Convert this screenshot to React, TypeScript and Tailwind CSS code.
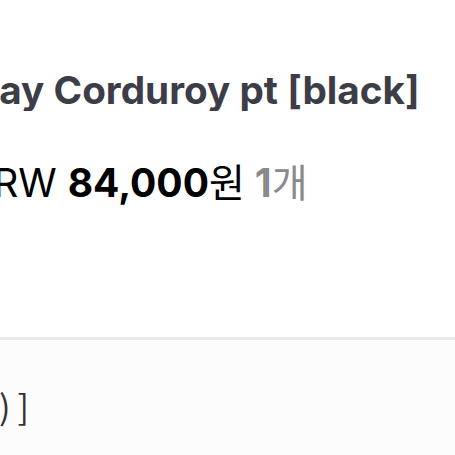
export default function App() {
  return (
    <div
      className="w-[455px] h-[455px] bg-white overflow-hidden flex flex-col"
      style={{ fontFamily: 'Inter, "Noto Sans CJK KR", sans-serif' }}
    >
      {/* product name */}
      <div className="pt-[69px] h-[111px] overflow-hidden whitespace-nowrap">
        <div className="ml-[-45px] text-[38.7px] leading-[42px] font-bold text-[#3c3d47]">
          Gray Corduroy pt [black]
        </div>
      </div>

      {/* price row */}
      <div className="mt-[48px] overflow-hidden whitespace-nowrap">
        <div className="ml-[-33px] text-[39px] leading-[48px] text-black">
          <span>KRW </span>
          <span className="font-bold">84,000</span>
          <span>원</span>
          <span className="ml-[10px] text-[#8a8a8a]">
            <span className="font-bold">1</span>개
          </span>
        </div>
      </div>

      {/* divider */}
      <div className="mt-[130px] h-[3px] bg-[#e9e9e9]" />

      {/* option row */}
      <div
        className="flex-1 bg-[#fcfcfc] pt-[46px] overflow-hidden whitespace-nowrap"
        style={{ fontFamily: '"Noto Sans CJK KR", sans-serif' }}
      >
        <div className="ml-[-93px] text-[34px] leading-[40px] text-[#333333]">
          (FREE)<span className="ml-[7px]">]</span>
        </div>
      </div>
    </div>
  );
}
